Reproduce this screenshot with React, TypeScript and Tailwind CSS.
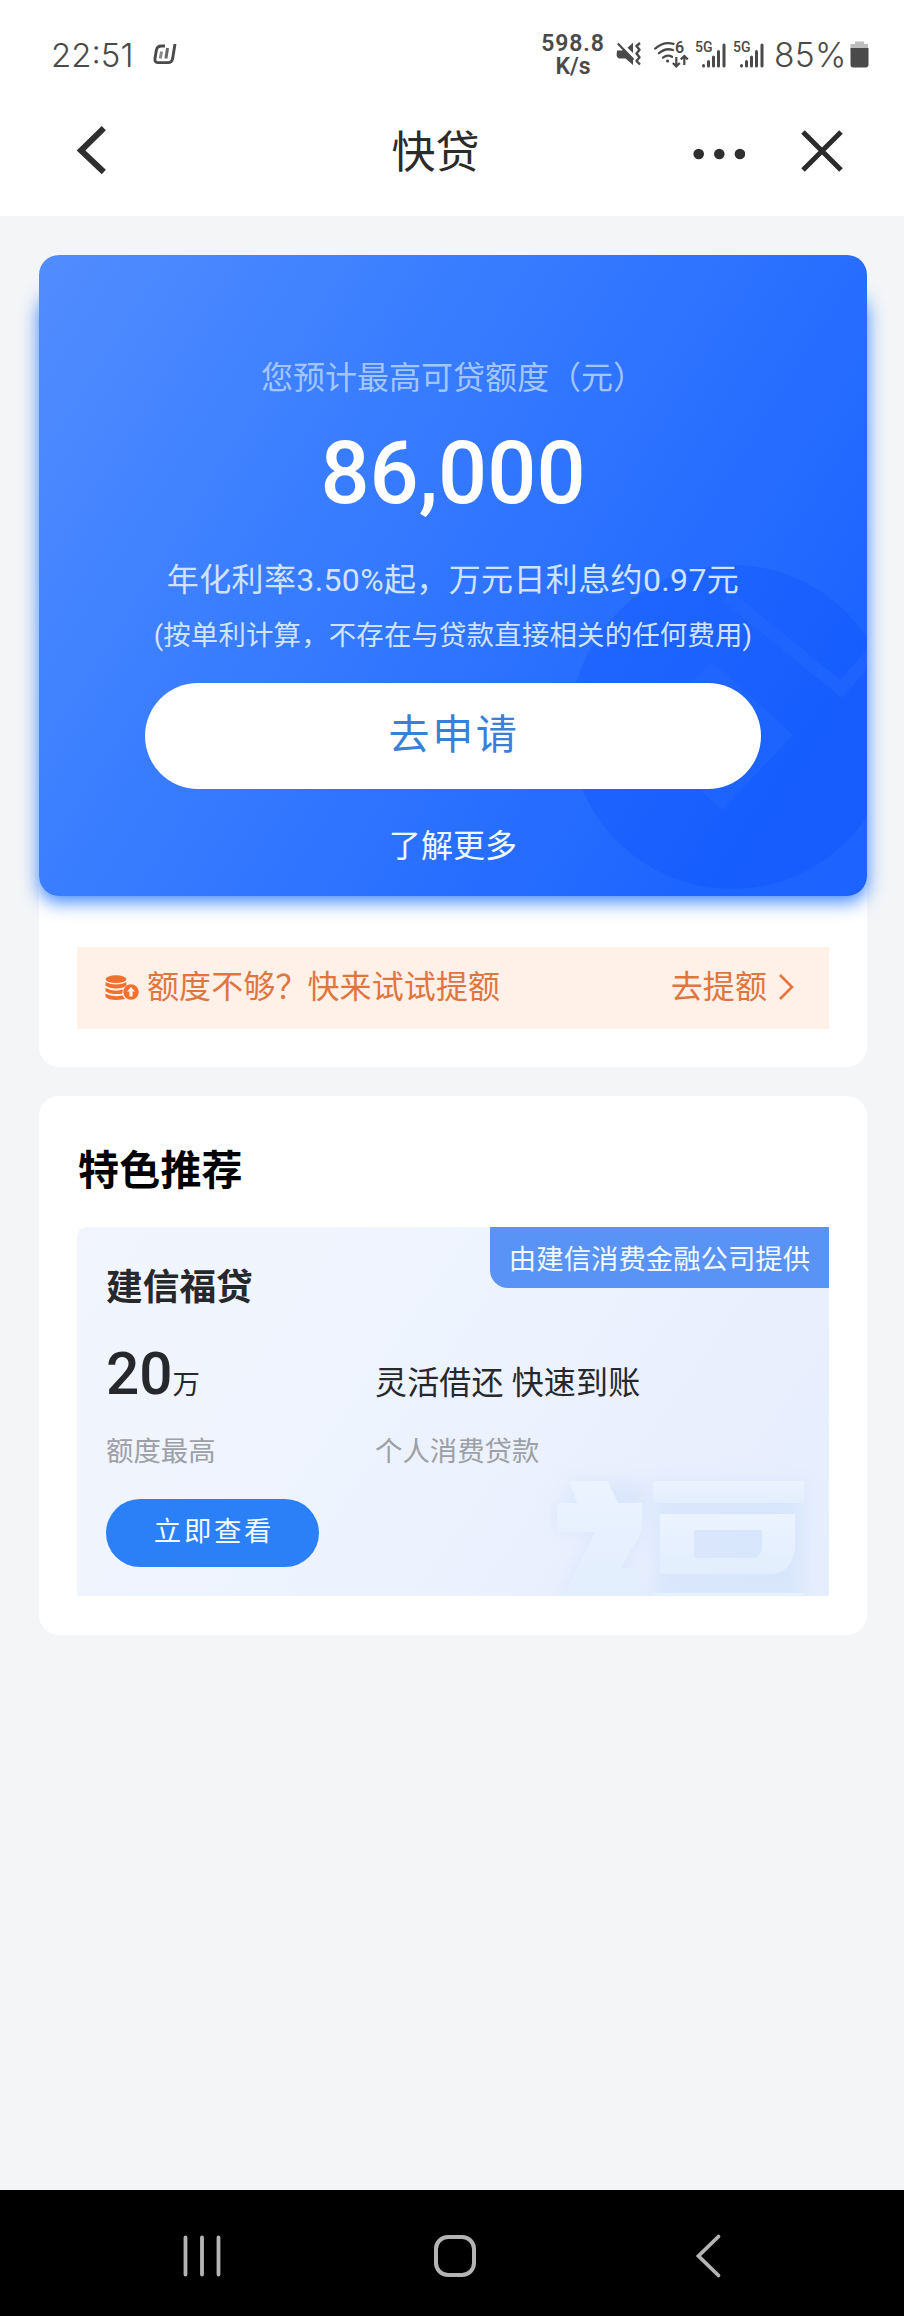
import { ReactNode } from 'react';

function BrandMark() {
  return (
    <svg width="24" height="22" viewBox="0 0 24 22" fill="none" stroke="#4a4a4a">
      <path d="M12 3H8.5Q4 3 3.3 7.5L2 15.5Q1.4 19.6 5.5 19.6H15Q18.9 19.6 19.6 15.7L22 1" strokeWidth="2.9" />
      <path d="M8.6 8.5L7.3 15.5" strokeWidth="3" stroke="#8a8a8a" />
      <path d="M14.6 5L12.9 15.5" strokeWidth="3" stroke="#666" />
    </svg>
  );
}

function MuteIcon() {
  return (
    <svg width="25" height="24" viewBox="0 0 25 24">
      <path d="M1 8.5H5.5L8.3 7.4L17 16.1V23L9.5 16.5H3Q0.6 16 0.6 13Z" fill="#4a4a4a" />
      <path d="M17 0.8V11L11.5 5.8Z" fill="#4a4a4a" />
      <path d="M1.8 1.4L17.5 17.8" stroke="#4a4a4a" strokeWidth="2.2" />
      <path d="M24 1L20.5 4L23.5 7.8L20.5 11.5L23.5 15.2L20.5 19L24 22.5" stroke="#4a4a4a" strokeWidth="2.4" strokeLinejoin="round" fill="none" />
    </svg>
  );
}

function WifiIcon() {
  return (
    <div className="relative w-[35px] h-[27px]">
      <svg width="35" height="27" viewBox="0 0 35 27" fill="none" stroke="#4a4a4a" strokeLinecap="round">
        <path d="M1.2 7.6Q9.5 0.2 19.5 2.8" strokeWidth="2.3" />
        <path d="M5 12.2Q11.5 6.5 19 9" strokeWidth="2.3" />
        <path d="M9 16.6Q13.5 13 18 15.8" strokeWidth="2.3" />
        <circle cx="13.6" cy="20" r="1.6" fill="#4a4a4a" stroke="none" />
        <path d="M22.3 16V25M18.8 22L22.3 25.4L25.8 22" strokeWidth="2.2" strokeLinecap="butt" />
        <path d="M30.3 24V15M26.8 18.4L30.3 15L33.8 18.4" strokeWidth="2.2" strokeLinecap="butt" />
      </svg>
      <span className="absolute left-[21px] top-[-1px] text-[16px] leading-[16px] font-semibold">6</span>
    </div>
  );
}

function SignalIcon() {
  return (
    <div className="relative w-[32px] h-[28px]">
      <span className="absolute left-0 top-0 text-[14px] leading-[14px] font-medium">5G</span>
      <svg className="absolute left-0 top-0" width="32" height="28" viewBox="0 0 32 28" stroke="#4a4a4a" strokeWidth="3" strokeLinecap="round">
        <path d="M8.5 25.6V26M13.5 21.5V26M18.5 17V26M23.5 11.5V26M29 5V26" />
      </svg>
    </div>
  );
}

function StatusBar() {
  return (
    <div className="h-[86px] flex items-start text-[#4a4a4a]">
      <span className="ml-[51px] mt-[36px] w-[86px] font-['Inter'] font-light text-[33px] leading-[38px] whitespace-nowrap">22:51</span>
      <div className="ml-[16px] mt-[43px]"><BrandMark /></div>
      <div className="ml-[364px] mt-[32px] w-[64px] text-center text-[23px] leading-[23px] font-semibold tracking-[0.9px]">
        598.8<br /><span className="tracking-normal">K/s</span>
      </div>
      <div className="ml-[11px] mt-[42px]"><MuteIcon /></div>
      <div className="ml-[13px] mt-[41px]"><WifiIcon /></div>
      <div className="ml-[6px] mt-[40px] flex gap-[6px]"><SignalIcon /><SignalIcon /></div>
      <span className="ml-[9px] mt-[36px] w-[74px] font-['Inter'] font-light text-[33.5px] leading-[38px] tracking-[0.3px] whitespace-nowrap">85%</span>
      <svg className="ml-[2px] mt-[41px]" width="19" height="27" viewBox="0 0 19 27">
        <path d="M5 0.5H14V3H18V9H0.5V3H5Z" fill="#bdbdbd" />
        <path d="M0.5 7H18.5V23.5Q18.5 26.5 15.5 26.5H3.5Q0.5 26.5 0.5 23.5Z" fill="#4a4a4a" />
      </svg>
    </div>
  );
}

function TitleBar() {
  return (
    <div className="relative h-[130px] flex justify-center">
      <svg className="absolute left-[76px] top-[38px]" width="32" height="52" viewBox="0 0 32 52" fill="none" stroke="#2f2f2f" strokeWidth="6">
        <path d="M27.8 4.2L5 26.5L27.8 48" />
      </svg>
      <h1 className="mt-[37px] -ml-[33px] text-[44px] leading-[60px] text-[#2b2b2b]">快贷</h1>
      <div className="absolute right-[61px] top-[44px] flex items-center">
        <svg className="mt-[5px]" width="52" height="12" viewBox="0 0 52 12" fill="#2f2f2f">
          <circle cx="5.7" cy="6" r="5.3" />
          <circle cx="26.3" cy="6" r="5.3" />
          <circle cx="46.9" cy="6" r="5.3" />
        </svg>
        <svg className="ml-[56px]" width="42" height="42" viewBox="0 0 42 42" stroke="#2b2b2b" strokeWidth="5">
          <path d="M2 2L40 40M40 2L2 40" />
        </svg>
      </div>
    </div>
  );
}

function QuotaCard() {
  return (
    <div className="relative h-[641px]">
      <div className="absolute inset-x-0 top-[34px] bottom-0 rounded-[20px] shadow-[0_6px_18px_rgba(30,115,255,0.85)]" />
      <div className="absolute inset-0 overflow-hidden rounded-[20px] bg-[linear-gradient(122deg,#528dff_0%,#3c7fff_30%,#2c72ff_58%,#1d65ff_85%,#1c63ff_100%)]">
        <svg width="828" height="641" viewBox="0 0 828 641" fill="none">
          <circle cx="693" cy="472" r="162" fill="#0c52fb" fillOpacity="0.32" />
          <path d="M673 407L754 480L683 555L601 480Z" fill="#3d7dff" fillOpacity="0.17" />
          <path d="M688 341L802 434L838 393" stroke="#3d7dff" strokeOpacity="0.17" strokeWidth="13" />
        </svg>
      </div>
      <div className="relative flex flex-col items-center text-center text-[#cfe3ff] whitespace-nowrap">
        <p className="mt-[99px] text-[32px] leading-[48px] text-[#a3c5ff]">您预计最高可贷额度（元）</p>
        <p className="mt-[22px] text-[86.5px] leading-[100px] font-medium text-white">86,000</p>
        <p className="mt-[32px] text-[32px] leading-[48px] tracking-[0.37px]">年化利率3.50%起，万元日利息约0.97元</p>
        <p className="mt-[12px] text-[27.4px] leading-[40px] tracking-[0.2px]">(按单利计算，不存在与贷款直接相关的任何费用)</p>
        <button className="mt-[27px] w-[616px] h-[106px] rounded-full bg-white text-[41px] leading-[104px] pl-[2px] pb-[2px] tracking-[2.7px] text-[#3a80d6]">
          去申请
        </button>
        <button className="mt-[33px] text-[32px] leading-[48px] text-[#f0f8ff] tracking-[0.1px]">了解更多</button>
      </div>
    </div>
  );
}

function CoinsIcon() {
  return (
    <svg width="34" height="26" viewBox="0 0 34 26">
      <g fill="#f07030">
        <ellipse cx="11" cy="4.2" rx="10.4" ry="3.9" />
        <path d="M0.5 7.2Q11 12 21.4 7.2V10.5Q18 13.4 11 13.4T0.5 10.5Z" />
        <path d="M0.5 13Q9 17.3 18 14.6L17 18.8Q6 20 0.5 16.2Z" />
        <path d="M0.5 18.8Q8 22.6 17.5 20.6L20 24Q6 26.8 0.5 22Z" />
        <circle cx="26" cy="17" r="7.7" />
      </g>
      <path d="M26 12L30 16.5H27.6V21.5H24.4V16.5H22Z" fill="#fff0e8" />
    </svg>
  );
}

function RaiseBanner() {
  return (
    <div className="mx-[38px] mt-[51px] h-[82px] flex items-center bg-[#fff0e8] pl-[28px] pr-[35px] text-[32px] leading-[48px] tracking-[0.1px] text-[#e0763f]">
      <CoinsIcon />
      <span className="ml-[8px] -mt-[3px]">额度不够？快来试试提额</span>
      <span className="ml-auto -mt-[3px]">去提额</span>
      <svg className="ml-[11px] -mt-[2px]" width="16" height="28" viewBox="0 0 16 28" fill="none" stroke="#e8743a" strokeWidth="2.6">
        <path d="M2 2L14 14L2 26" />
      </svg>
    </div>
  );
}

// Embossed 福 artwork in the corner of the product card
function FuArtwork() {
  return (
    <svg className="absolute right-0 bottom-0" width="310" height="160" viewBox="0 0 310 160">
      <defs>
        <filter id="fuGlow" x="-20%" y="-20%" width="140%" height="140%">
          <feGaussianBlur stdDeviation="9" />
        </filter>
        <linearGradient id="fuFill" x1="0" y1="0" x2="0" y2="1">
          <stop offset="0" stopColor="#ebf3ff" />
          <stop offset="1" stopColor="#e2eefd" />
        </linearGradient>
      </defs>
      <g fill="#cfe1fb" fillOpacity="0.6" filter="url(#fuGlow)">
        <path d="M50 46H126V80L108 133L122 170H40L75 95H38V66H57Z" />
        <path d="M135 46H286V170H135Z" />
      </g>
      <g fill="url(#fuFill)">
        <path d="M51 45H89L99 67H123V95L102 132H117L127 160H45L76 96H38V67H58Z" />
        <path d="M134 45H285V67H134Z" />
        <path fillRule="evenodd" d="M141 78H276V112Q274 136 252 138H141ZM175 94V122H234Q242 120 243 112V94Z" />
        <path d="M134 157H285V160H134Z" />
      </g>
    </svg>
  );
}

function Stat({ label, className, children }: { label: string; className: string; children: ReactNode }) {
  return (
    <div className={className}>
      <div className="h-[70px] flex items-baseline text-[#26282c]">{children}</div>
      <p className="mt-[23px] text-[27.4px] leading-[40px] text-[#9da0a6]">{label}</p>
    </div>
  );
}

function ProductCard() {
  return (
    <div className="relative mx-[38px] h-[369px] rounded-tl-[10px] bg-[linear-gradient(125deg,#f2f5fe_0%,#eef4fe_40%,#e9effd_75%,#e6eefd_100%)]">
      <FuArtwork />
      <div className="absolute right-0 top-0 w-[339px] h-[61px] rounded-bl-[18px] bg-[#5a93f6] text-center text-[27.4px] leading-[67px] text-[#f2f9ff] whitespace-nowrap">
        由建信消费金融公司提供
      </div>
      <div className="relative pl-[29px] pt-[33px]">
        <h3 className="text-[36.7px] leading-[56px] font-bold text-[#26282c]">建信福贷</h3>
        <div className="mt-[23px] flex whitespace-nowrap">
          <Stat label="额度最高" className="w-[269px]">
            <span className="text-[58.5px] leading-[70px] font-medium">20</span>
            <span className="text-[27.4px]">万</span>
          </Stat>
          <Stat label="个人消费贷款" className="">
            <span className="text-[32px] leading-[88px] tracking-[0.15px]">灵活借还 快速到账</span>
          </Stat>
        </div>
        <button className="mt-[27px] w-[213px] h-[68px] rounded-full bg-[#2c80f7] pl-[3px] pb-[2px] text-[27.4px] leading-[66px] tracking-[2.7px] text-[#f0faff]">
          立即查看
        </button>
      </div>
    </div>
  );
}

function NavBar() {
  return (
    <div className="mt-auto h-[126px] bg-black">
      <svg width="904" height="126" viewBox="0 0 904 126" fill="none" stroke="#b4b4b4" strokeLinecap="round">
        <path d="M185.5 47.5V84.5M202 47.5V84.5M218.5 47.5V84.5" strokeWidth="3.8" />
        <rect x="436" y="47" width="38" height="38" rx="12" strokeWidth="4" />
        <path d="M718.5 46.5L698.5 66L718.5 85.5" strokeWidth="3.8" />
      </svg>
    </div>
  );
}

export default function App() {
  return (
    <div className="w-[904px] h-[2316px] flex flex-col overflow-hidden bg-[#f3f5f7] font-['Roboto','Noto_Sans_CJK_SC',sans-serif]">
      <header className="h-[216px] bg-white">
        <StatusBar />
        <TitleBar />
      </header>

      <main className="pl-[39px] pr-[37px] pt-[39px]">
        <section className="h-[812px] rounded-[20px] bg-white">
          <QuotaCard />
          <RaiseBanner />
        </section>

        <section className="mt-[29px] h-[539px] rounded-[20px] bg-white">
          <h2 className="pl-[39px] pt-[45px] h-[131px] text-[41px] leading-[60px] tracking-[0.2px] font-bold text-black">特色推荐</h2>
          <ProductCard />
        </section>
      </main>

      <NavBar />
    </div>
  );
}
